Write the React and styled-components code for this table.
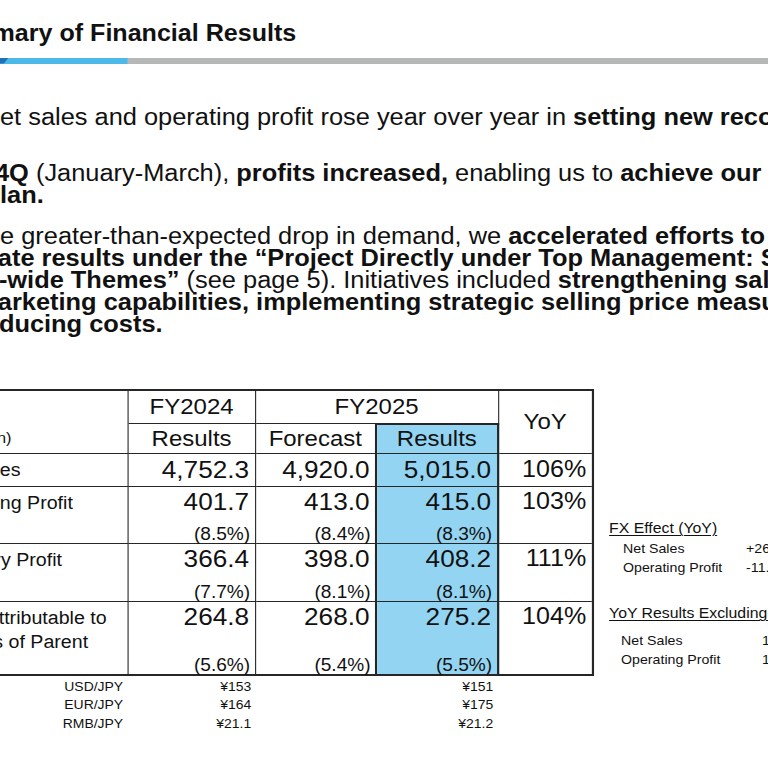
import React from 'react'
import styled, { createGlobalStyle } from 'styled-components'

const ink = '#111'
const rule = '#262626'
const sky = '#92d4f2'
const stretch = 1.09
const cols = '178px 116.5px 111.5px 111.5px 85.3px'

const GlobalStyle = createGlobalStyle`
  html, body {
    margin: 0;
    padding: 0;
    background: #fff;
  }
  body {
    font-family: 'Liberation Sans', Arial, sans-serif;
    color: ${ink};
  }
`

const Stage = styled.div`
  width: 768px;
  height: 768px;
  overflow: hidden;
  background: #fff;
`

const Slide = styled.div`
  width: 705px;
  display: flex;
  flex-direction: column;
  transform: scaleX(${stretch});
  transform-origin: 0 0;
`

const Title = styled.h1`
  margin: 20px 0 0 -56.7px;
  font-size: 23px;
  line-height: 26px;
  font-weight: 700;
  white-space: nowrap;
`

const TitleRule = styled.div`
  margin-top: 11.5px;
  height: 6px;
  display: flex;
  background: #b6b8b7;
`

const RuleAccent = styled.div`
  width: 117.4px;
  display: flex;
  background: #4cb9e8;
`

const RuleTip = styled.div`
  width: 8px;
  background: #1f72b8;
  clip-path: polygon(0 0, 100% 0, 45% 100%, 0 100%);
`

const Body = styled.div`
  margin-top: 42.5px;
  font-size: 23.3px;
  line-height: 22.2px;
`

const Para = styled.div`
  margin-top: ${(p) => p.$gap || 0}px;
`

const Line = styled.div`
  white-space: nowrap;
  margin-left: ${(p) => p.$x || 0}px;
`

const Lower = styled.div`
  margin-top: 53.5px;
  display: flex;
  align-items: flex-start;
`

const TableBlock = styled.div`
  flex: none;
  display: flex;
  flex-direction: column;
`

const Grid = styled.div`
  display: grid;
  grid-template-columns: ${cols};
  grid-template-rows: 33px 30px 33px 57px 58px 72px;
  width: 602.8px;
  margin-left: -62px;
  border: 2px solid ${rule};
`

const Cell = styled.div`
  box-sizing: border-box;
  grid-column: ${(p) => p.$col || 'auto'};
  grid-row: ${(p) => p.$row || 'auto'};
  border-right: ${(p) => (p.$edge === 'none' ? 0 : p.$edge === 'thick' ? '2px' : '1px')} solid ${rule};
  border-bottom: ${(p) => (p.$last ? 0 : '1px')} solid ${rule};
  border-top: ${(p) => (p.$top ? `1px solid ${rule}` : 0)};
  background: ${(p) => (p.$hl ? sky : 'transparent')};
`

const HeadCell = styled(Cell)`
  display: flex;
  align-items: center;
  justify-content: center;
  font-size: 22px;
  line-height: 24px;
`

const UnitCell = styled(Cell)`
  display: flex;
  flex-direction: column;
  justify-content: flex-end;
  padding: 0 0 6px 8px;
  font-size: 15px;
  line-height: 18px;
  white-space: nowrap;
`

const LabelCell = styled(Cell)`
  display: flex;
  flex-direction: column;
  justify-content: ${(p) => (p.$center ? 'center' : 'flex-start')};
  padding: ${(p) => (p.$center ? '0' : '3.5px')} 0 0 0.8px;
  font-size: 18px;
  line-height: 24px;
  white-space: nowrap;
`

const NumCell = styled(Cell)`
  display: flex;
  flex-direction: column;
  align-items: flex-end;
  justify-content: ${(p) => (p.$center ? 'center' : 'space-between')};
  padding: ${(p) => (p.$center ? '0' : '2px')} 5px 0 0;
`

const Value = styled.div`
  font-size: 24px;
  line-height: 1.1;
`

const YoyValue = styled(Value)`
  font-size: 23px;
`

const Pct = styled.div`
  font-size: 17.5px;
  line-height: 1;
  margin-right: -1px;
`

const Rates = styled.div`
  display: grid;
  grid-template-columns: ${cols};
  margin: 1.75px 0 0 -60px;
  font-size: 12.8px;
  line-height: 18.5px;
`

const Rate = styled.div`
  text-align: right;
  padding-right: ${(p) => p.$pad || 0}px;
`

const Notes = styled.div`
  flex: none;
  margin-left: 14px;
  padding-top: 130px;
  white-space: nowrap;
`

const NoteTitle = styled.div`
  margin-top: ${(p) => p.$gap || 0}px;
  font-size: 14.5px;
  line-height: 18px;
  text-decoration: underline;
  text-underline-offset: 2px;
  text-decoration-thickness: 1px;
`

const NoteList = styled.div`
  margin-top: ${(p) => p.$gap}px;
  padding-left: ${(p) => p.$indent}px;
  display: grid;
  grid-template-columns: ${(p) => p.$labelW}px auto;
  font-size: 13px;
  line-height: 19px;
`

const rows = [
  { label: ['Net Sales'], fy24: ['4,752.3'], fc: ['4,920.0'], res: ['5,015.0'], yoy: '106%', center: true },
  { label: ['Operating Profit'], fy24: ['401.7', '(8.5%)'], fc: ['413.0', '(8.4%)'], res: ['415.0', '(8.3%)'], yoy: '103%' },
  { label: ['Ordinary Profit'], fy24: ['366.4', '(7.7%)'], fc: ['398.0', '(8.1%)'], res: ['408.2', '(8.1%)'], yoy: '111%' },
  {
    label: ['Profit Attributable to', 'Owners of Parent'],
    fy24: ['264.8', '(5.6%)'],
    fc: ['268.0', '(5.4%)'],
    res: ['275.2', '(5.5%)'],
    yoy: '104%',
    last: true,
  },
]

const rates = [
  ['USD/JPY', '¥153', '¥151'],
  ['EUR/JPY', '¥164', '¥175'],
  ['RMB/JPY', '¥21.1', '¥21.2'],
]

const Figures = ({ data, ...rest }) => (
  <NumCell {...rest}>
    <Value>{data[0]}</Value>
    {data[1] && <Pct>{data[1]}</Pct>}
  </NumCell>
)

const ResultsTable = () => (
  <Grid>
    <UnitCell $col="1" $row="1 / 3">(¥ Billion)</UnitCell>
    <HeadCell $col="2" $row="1">FY2024</HeadCell>
    <HeadCell $col="3 / 5" $row="1">FY2025</HeadCell>
    <HeadCell $col="5" $row="1 / 3" $edge="none">YoY</HeadCell>
    <HeadCell $col="2" $row="2">Results</HeadCell>
    <HeadCell $col="3" $row="2" $edge="thick">Forecast</HeadCell>
    <HeadCell $col="4" $row="2" $edge="thick" $top $hl>Results</HeadCell>
    {rows.map((r) => (
      <React.Fragment key={r.label[0]}>
        <LabelCell $center={r.center} $last={r.last}>
          {r.label.map((t) => (
            <span key={t}>{t}</span>
          ))}
        </LabelCell>
        <Figures data={r.fy24} $center={r.center} $last={r.last} />
        <Figures data={r.fc} $center={r.center} $last={r.last} $edge="thick" />
        <Figures data={r.res} $center={r.center} $last={r.last} $edge="thick" $hl />
        <NumCell $center={r.center} $last={r.last} $edge="none">
          <YoyValue>{r.yoy}</YoyValue>
        </NumCell>
      </React.Fragment>
    ))}
  </Grid>
)

export default function App() {
  return (
    <>
      <GlobalStyle />
      <Stage>
        <Slide>
          <Title>Summary of Financial Results</Title>
          <TitleRule>
            <RuleAccent>
              <RuleTip />
            </RuleAccent>
          </TitleRule>

          <Body>
            <Para>
              <Line>
                et sales and operating profit rose year over year in <b>setting new records</b>
              </Line>
            </Para>
            <Para $gap={34}>
              <Line $x={-4.6}>
                <b>4Q</b> (January-March), <b>profits increased,</b> enabling us to <b>achieve our full-year</b>
              </Line>
              <Line>
                <b>lan.</b>
              </Line>
            </Para>
            <Para $gap={18}>
              <Line>
                e greater-than-expected drop in demand, we <b>accelerated efforts to</b>
              </Line>
              <Line $x={-2}>
                <b>ate results under the “Project Directly under Top Management: Strategic</b>
              </Line>
              <Line $x={-1}>
                <b>-wide Themes”</b> (see page 5). Initiatives included <b>strengthening sales</b>
              </Line>
              <Line $x={-2}>
                <b>arketing capabilities, implementing strategic selling price measures</b>
              </Line>
              <Line $x={-1}>
                <b>ducing costs.</b>
              </Line>
            </Para>
          </Body>

          <Lower>
            <TableBlock>
              <ResultsTable />
              <Rates>
                {rates.map(([pair, prev, cur]) => (
                  <React.Fragment key={pair}>
                    <Rate $pad={5}>{pair}</Rate>
                    <Rate $pad={4}>{prev}</Rate>
                    <Rate />
                    <Rate $pad={5}>{cur}</Rate>
                    <Rate />
                  </React.Fragment>
                ))}
              </Rates>
            </TableBlock>

            <Notes>
              <NoteTitle>FX Effect (YoY)</NoteTitle>
              <NoteList $gap={2} $indent={12.8} $labelW={112.9}>
                <span>Net Sales</span>
                <span>+26.9</span>
                <span>Operating Profit</span>
                <span>-11.5</span>
              </NoteList>
              <NoteTitle $gap={27}>YoY Results Excluding FX</NoteTitle>
              <NoteList $gap={9} $indent={11} $labelW={129.4}>
                <span>Net Sales</span>
                <span>105%</span>
                <span>Operating Profit</span>
                <span>106%</span>
              </NoteList>
            </Notes>
          </Lower>
        </Slide>
      </Stage>
    </>
  )
}
